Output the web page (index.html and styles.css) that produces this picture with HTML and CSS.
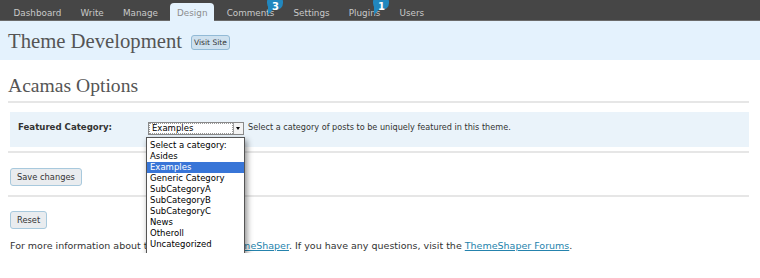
FILE: index.html
```html
<!DOCTYPE html>
<html lang="en">
<head>
    <meta charset="UTF-8">
    <title>Theme Development &lsaquo; Acamas Options</title>
    <link rel="stylesheet" href="styles.css">
</head>
<body>
    <!-- admin menu -->
    <div class="topnav">
        <a class="tab" href="#">Dashboard</a>
        <a class="tab" href="#">Write</a>
        <a class="tab" href="#">Manage</a>
        <a class="tab current" href="#">Design</a>
        <a class="tab" href="#">Comments<span class="badge"><svg width="20" height="22" viewBox="0 0 20 22"><rect x="2" y="1" width="16" height="15" rx="7" fill="#2187be"/><path d="M3 11 L9 14 L3 21 Z" fill="#2187be"/></svg><span class="count">3</span></span></a>
        <a class="tab" href="#">Settings</a>
        <a class="tab" href="#">Plugins<span class="badge"><svg width="20" height="22" viewBox="0 0 20 22"><rect x="2" y="1" width="16" height="15" rx="7" fill="#2187be"/><path d="M3 11 L9 14 L3 21 Z" fill="#2187be"/></svg><span class="count">1</span></span></a>
        <a class="tab" href="#">Users</a>
    </div>

    <div class="head">
        <h1>Theme Development</h1>
        <a class="visit" href="#">Visit Site</a>
    </div>

    <div class="wrap">
        <h2>Acamas Options</h2>

        <div class="form-row">
            <div class="row-label">Featured Category:</div>
            <div class="select">
                <span class="select-value">Examples</span>
                <span class="select-arrow"></span>
                <ul class="options">
                    <li>Select a category:</li>
                    <li>Asides</li>
                    <li class="selected">Examples</li>
                    <li>Generic Category</li>
                    <li>SubCategoryA</li>
                    <li>SubCategoryB</li>
                    <li>SubCategoryC</li>
                    <li>News</li>
                    <li>Otheroll</li>
                    <li>Uncategorized</li>
                </ul>
            </div>
            <span class="desc">Select a category of posts to be uniquely featured in this theme.</span>
        </div>

        <div class="submit">
            <button type="button">Save changes</button>
        </div>
        <div class="submit reset">
            <button type="button">Reset</button>
        </div>

        <p class="info">For more information about this theme, visit <a href="#">ThemeShaper</a>. If you have any questions, visit the <a href="#">ThemeShaper Forums</a>.</p>
    </div>
</body>
</html>
```

FILE: styles.css
```css
/* base */
body {
    margin: 0;
    font-family: "DejaVu Sans", Verdana, sans-serif;
    color: #333;
    background: #fff;
}

a {
    text-decoration: none;
}

/* admin menu */
.topnav {
    display: flex;
    align-items: flex-end;
    height: 21px;
    padding-left: 4px;
    background: #464646;
    box-shadow: inset 0 -1px #6a6a6a;
}

.tab {
    position: relative;
    height: 18px;
    padding: 0 9.6px;
    font-size: 8.8px;
    line-height: 20px;
    color: #c9c9c9;
}

.tab.current {
    margin: 0 2.6px;
    padding: 0 7px;
    background: #e4f2fd;
    color: #8d8d8d;
    border-radius: 4px 4px 0 0;
}

.badge {
    position: absolute;
    top: -9px;
    left: calc(100% - 18.5px);
    width: 20px;
    height: 22px;
}

.badge svg {
    display: block;
}

.count {
    position: absolute;
    top: 7.5px;
    left: 0;
    width: 20px;
    text-align: center;
    font-size: 10px;
    font-weight: bold;
    line-height: 10px;
    color: #fff;
}

/* page header */
.head {
    display: flex;
    align-items: center;
    height: 39px;
    padding-left: 8px;
    background: #e4f2fd;
}

h1, h2 {
    margin: 0;
    font-family: "Liberation Serif", "Times New Roman", serif;
    font-weight: normal;
    color: #555;
}

h1 {
    font-size: 20.7px;
    line-height: 22px;
}

.visit {
    margin: 4px 0 0 9px;
    padding: 0 2px;
    height: 13px;
    font-size: 7.5px;
    line-height: 13px;
    color: #333;
    background: #cee1ef;
    border: 1px solid #92bad6;
    border-radius: 3px;
}

/* options */
.wrap {
    padding: 0 11px 0 8px;
}

h2 {
    font-size: 19.6px;
    line-height: 22px;
    padding: 15px 0 4px;
    border-bottom: 2px solid #e6e6e6;
}

.form-row {
    display: flex;
    align-items: flex-start;
    height: 35px;
    margin: 9px 0 0 2px;
    padding-top: 10px;
    box-sizing: border-box;
    background: #eaf3fa;
}

.row-label {
    width: 130px;
    padding-left: 8px;
    font-size: 8.6px;
    font-weight: bold;
    line-height: 11px;
    color: #333;
}

.select {
    position: relative;
    display: flex;
    width: 94px;
    height: 11px;
    border: 1px solid #8a8a8a;
    background: #fff;
}

.select-value {
    flex: 1;
    margin: 1px;
    padding-left: 2px;
    font-size: 8.5px;
    line-height: 9px;
    color: #000;
    outline: 1px dotted #999;
}

.select-arrow {
    position: relative;
    width: 9px;
    border-left: 1px solid #a0a0a0;
    background: #f4f4f4;
}

.select-arrow::after {
    content: "";
    position: absolute;
    top: 4px;
    left: 2px;
    border: 2.5px solid transparent;
    border-top: 3px solid #000;
}

.options {
    position: absolute;
    top: 14px;
    left: -3px;
    z-index: 2;
    width: 97px;
    height: 116px;
    margin: 0;
    padding: 2px 0 0;
    list-style: none;
    background: #fff;
    border: 1px solid #555;
    box-shadow: 2px 3px 6px rgba(0, 0, 0, 0.45);
    box-sizing: content-box;
}

.options li {
    height: 11px;
    padding-left: 3px;
    font-size: 8.5px;
    line-height: 11px;
    color: #000;
}

.options li.selected {
    background: #3875d7;
    color: #fff;
}

.desc {
    margin-left: 4px;
    font-size: 8.15px;
    line-height: 11px;
    color: #333;
}

.submit {
    padding: 15px 0 9px 2px;
    border-top: 2px solid #e6e6e6;
    margin-top: 4px;
}

.submit.reset {
    margin-top: 0;
    padding: 14px 0 0 2px;
}

.submit button {
    display: block;
    height: 18px;
    padding: 0 6px;
    font-family: "DejaVu Sans", Verdana, sans-serif;
    font-size: 8.3px;
    color: #333;
    background: #e9ecef;
    border: 1px solid #a8c9dd;
    border-radius: 3px;
}

.info {
    margin: 10px 0 0 2px;
    font-size: 9.5px;
    line-height: 14px;
    color: #333;
}

.info a {
    color: #2583ad;
    text-decoration: underline;
}
```
